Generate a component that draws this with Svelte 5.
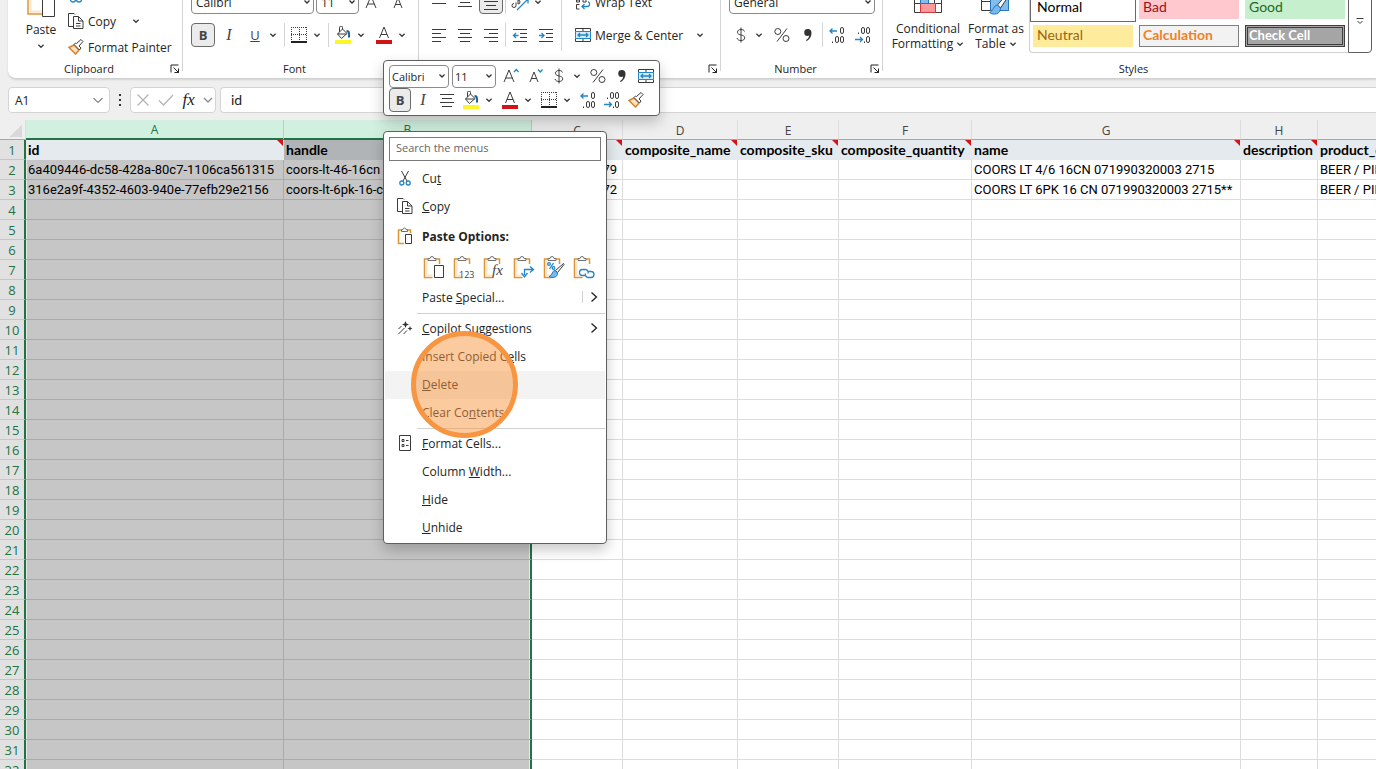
<script lang="ts">
	type Cell = { text: string; note?: boolean; right?: boolean };

	const columns = [
		{ name: 'A', width: 258 },
		{ name: 'B', width: 248 },
		{ name: 'C', width: 91 },
		{ name: 'D', width: 115 },
		{ name: 'E', width: 101 },
		{ name: 'F', width: 133 },
		{ name: 'G', width: 269 },
		{ name: 'H', width: 77 },
		{ name: 'I', width: 120 }
	];

	const filled: Cell[][] = [
		[
			{ text: 'id', note: true },
			{ text: 'handle' },
			{ text: '', note: true },
			{ text: 'composite_name', note: true },
			{ text: 'composite_sku', note: true },
			{ text: 'composite_quantity', note: true },
			{ text: 'name', note: true },
			{ text: 'description', note: true },
			{ text: 'product_category' }
		],
		[
			{ text: '6a409446-dc58-428a-80c7-1106ca561315' },
			{ text: 'coors-lt-46-16cn' },
			{ text: '79', right: true },
			{ text: '' },
			{ text: '' },
			{ text: '' },
			{ text: 'COORS LT 4/6 16CN 071990320003 2715' },
			{ text: '' },
			{ text: 'BEER / PILSNER' }
		],
		[
			{ text: '316e2a9f-4352-4603-940e-77efb29e2156' },
			{ text: 'coors-lt-6pk-16-cn' },
			{ text: '72', right: true },
			{ text: '' },
			{ text: '' },
			{ text: '' },
			{ text: 'COORS LT 6PK 16 CN 071990320003 2715**' },
			{ text: '' },
			{ text: 'BEER / PILSNER' }
		]
	];

	const blank: Cell[] = columns.map(() => ({ text: '' }));
	const rows = Array.from({ length: 32 }, (_, i) => filled[i] ?? blank);

	const pasteKinds = ['Paste', 'Values', 'Formulas', 'Transpose', 'Formatting', 'Paste Link'];
	let formula = $state('id');
	let search = $state('');
</script>

{#snippet chev()}
	<svg class="chev" width="12" height="12" viewBox="0 0 12 12"><path d="M3.4 4.8 6 7.3l2.6-2.5" /></svg>
{/snippet}

{#snippet drop(label: string)}
	<button class="drop" aria-label={label}>{@render chev()}</button>
{/snippet}

{#snippet launcher(label: string)}
	<button class="launcher" aria-label={label}>
		<svg width="10" height="10" viewBox="0 0 10 10"><path d="M1 8.5V1h7.5M3.5 3.5l5 5M8.5 4.5v4h-4" /></svg>
	</button>
{/snippet}

{#snippet lines(kind: string)}
	<svg width="16" height="16" viewBox="0 0 16 16">
		{#if kind === 'left'}
			<path d="M1 2.5h14M1 6.5h9M1 10.5h14M1 14.5h9" />
		{:else if kind === 'right'}
			<path d="M1 2.5h14M6 6.5h9M1 10.5h14M6 14.5h9" />
		{:else if kind === 'top'}
			<path d="M1 1.5h14M3 5.5h10M1 9.5h14" />
		{:else if kind === 'middle'}
			<path d="M1 4.5h14M3 8.5h10M1 12.5h14" />
		{:else if kind === 'bottom'}
			<path d="M1 7.5h14M3 11.5h10M1 15.5h14" />
		{:else}
			<path d="M1 2.5h14M3 6.5h10M1 10.5h14M3 14.5h10" />
		{/if}
	</svg>
{/snippet}

{#snippet indent(out: boolean)}
	<svg width="16" height="16" viewBox="0 0 16 16">
		<path d="M1 2.5h14M8 6.5h7M8 10.5h7M1 14.5h14" />
		{#if out}
			<path class="blue" d="M6.5 8.5h-5M4 6 1.5 8.5 4 11" />
		{:else}
			<path class="blue" d="M1 8.5h5M3.5 6 6 8.5 3.5 11" />
		{/if}
	</svg>
{/snippet}

{#snippet borders()}
	<svg width="16" height="16" viewBox="0 0 16 16">
		<path stroke-dasharray="1 1" d="M.5 0v14M8.5 0v14M15.5 0v14M0 .5h16M0 7.5h16" />
		<path class="dark" d="M0 15h16" />
	</svg>
{/snippet}

{#snippet bucket()}
	<svg width="18" height="18" viewBox="0 0 18 18">
		<path d="M3.5 8 8.5 3l4.5 4.5-5.5 5zM8.5 3V1.500a1.500 1.500 0 0 0-3 0V6M3.500 8h9" />
		<path class="navy" d="M12.500 5.500c2-1 3 1 2.500 6" />
		<path class="yellow" d="M1 14h16v4H1z" />
	</svg>
{/snippet}

{#snippet fontColor()}
	<svg width="18" height="18" viewBox="0 0 18 18">
		<path d="m4.500 12 4.500-11 4.500 11M6 8.500h6" />
		<path class="red" d="M1 14h16v4H1z" />
	</svg>
{/snippet}

{#snippet merge()}
	<svg width="16" height="16" viewBox="0 0 16 16">
		<path d="M.5 4.500V1.500h15v3M.5 11.500v3h15v-3M8 1.500v3M8 11.500v3" />
		<path class="sky" d="M.5 4.500h15v7H.5z" />
		<path class="blue" d="M3 8h10M5 6 3 8l2 2M11 6l2 2-2 2" />
	</svg>
{/snippet}

{#snippet decimals(more: boolean)}
	<svg width="18" height="18" viewBox="0 0 18 18">
		{#if more}
			<path class="blue" d="M9 5H2M4.500 2.500 2 5l2.500 2.500" />
			<rect x="12.500" y="1.500" width="3" height="6" rx="1.500" />
			<rect x="7.500" y="10.500" width="3" height="6" rx="1.500" />
			<rect x="12.500" y="10.500" width="3" height="6" rx="1.500" />
			<path d="M4.500 15.500v1.500" />
		{:else}
			<rect x="7.500" y="1.500" width="3" height="6" rx="1.500" />
			<rect x="12.500" y="1.500" width="3" height="6" rx="1.500" />
			<rect x="12.500" y="10.500" width="3" height="6" rx="1.500" />
			<path class="blue" d="M1 13.500h7.500M6 11l2.500 2.500L6 16" />
			<path d="M4.500 6.500V8M10.500 15.500V17" />
		{/if}
	</svg>
{/snippet}

{#snippet brush()}
	<svg width="16" height="16" viewBox="0 0 16 16">
		<path class="tan" d="M1 8.500 6 6l5 5-3.500 4z" />
		<path class="paper" d="m6 5.500 5.500 5.500 1.500-2-2-2 4-4.500-2-2L8.500 4.500l-1-.5z" />
	</svg>
{/snippet}

{#snippet percent()}
	<svg width="18" height="18" viewBox="0 0 18 18">
		<circle cx="4.800" cy="5.500" r="3" /><circle cx="13" cy="12.500" r="3" /><path d="M14 2.500 4 15.500" />
	</svg>
{/snippet}

{#snippet comma()}
	<svg width="12" height="16" viewBox="0 0 12 16">
		<path class="ink" d="M6 2a3.500 3.500 0 0 0-.5 7c.8 0 1.300-.2 1.700-.5-.3 2-1.500 3.500-3.200 4.500l.5 1c3-1.200 5-4.500 5-8C9.500 3.500 8.200 2 6 2z" />
	</svg>
{/snippet}

{#snippet dollar()}
	<svg width="12" height="18" viewBox="0 0 12 18">
		<path d="M6 1.500v15M9.500 5.500C9 4 7.800 3.500 6 3.500c-2 0-3.500 1-3.500 2.700C2.500 10 9.700 8 9.700 11.800c0 1.700-1.500 2.700-3.700 2.700-2 0-3.500-.8-4-2.500" />
	</svg>
{/snippet}

{#snippet sizeA(grow: boolean)}
	<svg width="18" height="18" viewBox="0 0 18 18">
		{#if grow}
			<path d="m2 15 5-12 5 12M3.500 11h7" />
			<path class="blue" d="m12 5 2.300-2.500L16.600 5" />
		{:else}
			<path d="m4 15 4-10 4 10M5.300 11.500h5.500" />
			<path class="blue" d="m12 2.500 2.300 2.500 2.300-2.500" />
		{/if}
	</svg>
{/snippet}

{#snippet copyIcon()}
	<svg width="16" height="16" viewBox="0 0 16 16">
		<path d="M5 13.500H.500V.500H6l1 1M5.500 3.500h5l4.500 4.500v7.500H5.500zM10.500 3.500V8H15M8 10.500h4.500M8 13h4.500" />
	</svg>
{/snippet}

{#snippet clip(kind: string)}
	<svg width="22" height="24" viewBox="0 0 22 24">
		<path class="orange" d="M5 4H1.500v18.500h8M13 4h3.500v5" />
		<path class="peach" d="M3.500 6v14.500h6" />
		<path class="soft" d="M5 5.500V3.500h2a2 2 0 0 1 4 0h2v2z" />
		{#if kind === 'Paste'}
			<path class="paper" d="M11.500 10.500h9v12h-9z" />
		{:else if kind === 'Values'}
			<text x="6" y="23">123</text>
		{:else if kind === 'Formulas'}
			<text class="fx" x="9" y="20">fx</text>
		{:else if kind === 'Transpose'}
			<path class="blue" d="M11.500 20v-5.500H20M17 11.500l3.500 3-3.500 3M8.500 18l3 4 3-4" />
		{:else if kind === 'Formatting'}
			<path class="blue" d="m10.500 8-4 6" /><circle class="blue" cx="6" cy="9" r="1.300" /><circle class="blue" cx="10.500" cy="13" r="1.300" />
			<path class="paper" d="m20.500 8.500-8 7 2 2 6.500-8z" />
			<path class="paint" d="M12 15.500c-3 0-2.500 5-6 6 3 2 9 1 8.500-3.500z" />
		{:else}
			<path class="blue" d="M12 20.500H9.500a3 3 0 0 1 0-6h3a3 3 0 0 1 2.500 4M15 16.500h3a3 3 0 0 1 0 6h-3a3 3 0 0 1-2.500-4" />
		{/if}
	</svg>
{/snippet}

{#snippet sheet()}
	<svg width="32" height="30" viewBox="0 0 32 30">
		<path class="paper" d="M2.500 1.500h27v27h-27zM2.500 10.500h27M2.500 19.500h27M9.500 1.500v27M22.500 1.500v27" />
		<path class="skyfill" d="M8.500 10.500h8v9h-8z" />
		<path class="rose" d="M8.500 19.500h15v9h-15z" />
	</svg>
{/snippet}

{#snippet menuItem(before: string, key: string, after: string)}
	<span class="item-text">{before}<u>{key}</u>{after}</span>
{/snippet}

<div class="excel">
	<header class="ribbon">
		<section class="group clipboard">
			<div class="body">
				<button class="big">
					<svg width="30" height="32" viewBox="0 0 30 32">
						<path class="orange wide" d="M8 4H2v25h14M20 4h6v7" />
						<path class="peach" d="M4.500 7v19.500H16" />
						<path class="paper" d="M16.500 14.500h12v17h-12z" />
					</svg>
					<span>Paste</span>
					{@render chev()}
				</button>
				<div class="stack">
					<button class="line cut">
						<svg width="16" height="16" viewBox="0 0 16 16"><path d="m4 0 6 10M12 0 6 10" /><circle class="blue" cx="5" cy="12.500" r="2.500" /><circle class="blue" cx="11" cy="12.500" r="2.500" /></svg>
						Cut
					</button>
					<div class="split">
						<button class="line">{@render copyIcon()} Copy</button>
						{@render drop('Copy options')}
					</div>
					<button class="line">{@render brush()} Format Painter</button>
				</div>
			</div>
			<div class="caption"><span>Clipboard</span>{@render launcher('Clipboard settings')}</div>
		</section>
		<i class="divider"></i>

		<section class="group font">
			<div class="tools">
				<div class="row">
					<select class="wide-select" aria-label="Font"><option>Calibri</option></select>
					<select class="size-select" aria-label="Font size"><option>11</option></select>
					<button class="tool" aria-label="Increase font size">{@render sizeA(true)}</button>
					<button class="tool" aria-label="Decrease font size">{@render sizeA(false)}</button>
				</div>
				<div class="row">
					<button class="tool pressed"><b>B</b></button>
					<button class="tool"><em>I</em></button>
					<button class="tool"><u>U</u></button>
					{@render drop('Underline style')}
					<i class="rule"></i>
					<button class="tool" aria-label="Borders">{@render borders()}</button>
					{@render drop('Border styles')}
					<i class="rule"></i>
					<button class="tool" aria-label="Fill colour">{@render bucket()}</button>
					{@render drop('Fill colours')}
					<button class="tool" aria-label="Font colour">{@render fontColor()}</button>
					{@render drop('Font colours')}
				</div>
			</div>
			<div class="caption"><span>Font</span>{@render launcher('Font settings')}</div>
		</section>
		<i class="divider"></i>

		<section class="group alignment">
			<div class="body">
				<div class="tools">
					<div class="row">
						<button class="tool" aria-label="Top align">{@render lines('top')}</button>
						<button class="tool" aria-label="Middle align">{@render lines('middle')}</button>
						<button class="tool pressed" aria-label="Bottom align">{@render lines('bottom')}</button>
						<i class="rule"></i>
						<button class="tool" aria-label="Orientation">
							<svg width="18" height="18" viewBox="0 0 18 18"><path d="M3 10.500a2 2 0 1 0 2 2v-3M7 4v7a2 2 0 1 0 0-4" /><path class="blue" d="M6 17 17 6M12.500 6H17v4.500" /></svg>
						</button>
						{@render drop('Orientations')}
					</div>
					<div class="row">
						<button class="tool" aria-label="Align left">{@render lines('left')}</button>
						<button class="tool" aria-label="Center">{@render lines('center')}</button>
						<button class="tool" aria-label="Align right">{@render lines('right')}</button>
						<i class="rule"></i>
						<button class="tool" aria-label="Decrease indent">{@render indent(true)}</button>
						<button class="tool" aria-label="Increase indent">{@render indent(false)}</button>
					</div>
				</div>
				<i class="divider short"></i>
				<div class="tools wrap">
					<button class="line">
						<svg width="16" height="16" viewBox="0 0 16 16"><path d="M1.500 4.500h3V8h-3V6h3M8 1v7h3V4.500H8M4.500 10.500h-3V15h3" /><path class="blue" d="M13 7.500c3 2 1.500 5-1 5H7M9.500 10 7 12.500 9.500 15" /></svg>
						Wrap Text
					</button>
					<div class="split">
						<button class="line">{@render merge()} Merge &amp; Center</button>
						{@render drop('Merge options')}
					</div>
				</div>
			</div>
			<div class="caption"><span></span>{@render launcher('Alignment settings')}</div>
		</section>
		<i class="divider"></i>

		<section class="group number">
			<div class="tools">
				<select aria-label="Number format"><option>General</option></select>
				<div class="row">
					<button class="tool" aria-label="Accounting format">{@render dollar()}</button>
					{@render drop('Currencies')}
					<button class="tool" aria-label="Percent">{@render percent()}</button>
					<button class="tool" aria-label="Comma style">{@render comma()}</button>
					<i class="rule"></i>
					<button class="tool" aria-label="Increase decimal">{@render decimals(true)}</button>
					<button class="tool" aria-label="Decrease decimal">{@render decimals(false)}</button>
				</div>
			</div>
			<div class="caption"><span>Number</span>{@render launcher('Number settings')}</div>
		</section>
		<i class="divider"></i>

		<section class="group styles">
			<div class="body">
				<button class="big tall">
					{@render sheet()}
					<span>Conditional<br />Formatting {@render chev()}</span>
				</button>
				<button class="big tall">
					<svg width="34" height="34" viewBox="0 0 34 34">
						<path class="paper" d="M2.500 1.500h27v27h-27zM2.500 10.500h27M2.500 19.500h27M11.500 1.500v27M20.500 1.500v27" />
						<path class="skyfill" d="M11.500 10.500h18v18h-18z" />
						<path class="paper" d="M31 8 18.500 23l3 3L33 9z" />
						<path class="paint" d="M18.500 23c-4 0-4 6-8 7.500 4 3 11 2 11-4.500z" />
					</svg>
					<span>Format as<br />Table {@render chev()}</span>
				</button>
				<div class="gallery">
					<div class="swatches">
						<button class="swatch normal">Normal</button>
						<button class="swatch bad">Bad</button>
						<button class="swatch good">Good</button>
						<button class="swatch neutral">Neutral</button>
						<button class="swatch calculation">Calculation</button>
						<button class="swatch check">Check Cell</button>
					</div>
					<button class="more" aria-label="More styles">
						<svg width="10" height="10" viewBox="0 0 10 10"><path d="M1.500 2.500h7M2.500 5 5 7.500 7.500 5" /></svg>
					</button>
				</div>
			</div>
			<div class="caption"><span>Styles</span></div>
		</section>
	</header>

	<div class="formula-bar">
		<button class="field name-box">
			A1
			<svg width="12" height="12" viewBox="0 0 12 12"><path d="m1.500 4 4.500 4.500L10.500 4" /></svg>
		</button>
		<svg class="dots" width="4" height="14" viewBox="0 0 4 14"><path d="M1 1h2v2H1zM1 6h2v2H1zM1 11h2v2H1z" /></svg>
		<div class="field fx-box">
			<button aria-label="Cancel"><svg width="14" height="14" viewBox="0 0 14 14"><path class="faint" d="m1.500 1.500 11 11M12.500 1.500l-11 11" /></svg></button>
			<button aria-label="Enter"><svg width="16" height="14" viewBox="0 0 16 14"><path class="faint" d="m1 7.500 4.500 4.500L15 2" /></svg></button>
			<button class="fx-label">fx</button>
			<button aria-label="Functions"><svg width="10" height="12" viewBox="0 0 10 12"><path class="grey" d="M1 4l4 4 4-4" /></svg></button>
		</div>
		<input class="field formula" aria-label="Formula" bind:value={formula} />
	</div>

	<main class="sheet">
		<table>
			<colgroup>
				<col class="row-col" />
				{#each columns as column (column.name)}
					<col style="width: {column.width}px" />
				{/each}
			</colgroup>
			<thead>
				<tr>
					<th class="corner" aria-label="Select all"></th>
					{#each columns as column, c (column.name)}
						<th class:selected={c < 2}>{column.name}</th>
					{/each}
				</tr>
			</thead>
			<tbody>
				{#each rows as cells, r}
					<tr class:head={r === 0}>
						<th>{r + 1}</th>
						{#each cells as cell, c}
							<td class:selected={c < 2} class:first={c === 0} class:last={c === 1} class:note={cell.note} class:right={cell.right}>{cell.text}</td>
						{/each}
					</tr>
				{/each}
			</tbody>
		</table>
	</main>

	<div class="mini">
		<div class="row">
			<select class="mini-font" aria-label="Font"><option>Calibri</option></select>
			<select class="mini-size" aria-label="Font size"><option>11</option></select>
			<button class="tool" aria-label="Increase font size">{@render sizeA(true)}</button>
			<button class="tool" aria-label="Decrease font size">{@render sizeA(false)}</button>
			<button class="tool" aria-label="Accounting format">{@render dollar()}</button>
			{@render drop('Currencies')}
			<button class="tool" aria-label="Percent">{@render percent()}</button>
			<button class="tool" aria-label="Comma style">{@render comma()}</button>
			<button class="tool" aria-label="Merge and center">{@render merge()}</button>
		</div>
		<div class="row">
			<button class="tool pressed"><b>B</b></button>
			<button class="tool"><em>I</em></button>
			<button class="tool" aria-label="Center">{@render lines('center')}</button>
			<button class="tool" aria-label="Fill colour">{@render bucket()}</button>
			{@render drop('Fill colours')}
			<button class="tool" aria-label="Font colour">{@render fontColor()}</button>
			{@render drop('Font colours')}
			<button class="tool" aria-label="Borders">{@render borders()}</button>
			{@render drop('Border styles')}
			<button class="tool" aria-label="Increase decimal">{@render decimals(true)}</button>
			<button class="tool" aria-label="Decrease decimal">{@render decimals(false)}</button>
			<button class="tool" aria-label="Format painter">{@render brush()}</button>
		</div>
	</div>

	<div class="menu">
		<input class="search" placeholder="Search the menus" aria-label="Search the menus" bind:value={search} />
		<button class="item">
			<svg width="16" height="16" viewBox="0 0 16 16"><path d="m4.500 1 5.500 10M11.500 1 6 11" /><circle class="blue" cx="4.800" cy="13" r="2" /><circle class="blue" cx="11.200" cy="13" r="2" /></svg>
			{@render menuItem('Cu', 't', '')}
		</button>
		<button class="item">{@render copyIcon()}{@render menuItem('', 'C', 'opy')}</button>
		<div class="item heading">
			<svg width="16" height="18" viewBox="0 0 16 18">
				<path class="orange" d="M4 3H1.500v13.500H7M11 3h2.500v3" />
				<path class="soft" d="M4.500 4.500v-2h1.500a1.500 1.500 0 0 1 3 0h1.500v2z" />
				<path class="paper" d="M8.500 7.500h6v9h-6z" />
			</svg>
			<span class="item-text">Paste Options:</span>
		</div>
		<div class="pastes">
			{#each pasteKinds as kind}
				<button aria-label={kind}>{@render clip(kind)}</button>
			{/each}
		</div>
		<button class="item">
			<span></span>{@render menuItem('Paste ', 'S', 'pecial...')}
			<svg class="arrow split-arrow" width="8" height="12" viewBox="0 0 8 12"><path d="m1.500 1.500 5 4.500-5 4.500" /></svg>
		</button>
		<hr />
		<button class="item">
			<svg width="16" height="16" viewBox="0 0 16 16">
				<path class="ink" d="m8.500 1 1 2.500L12 4.500 9.500 5.500l-1 2.500-1-2.500L5 4.500l2.500-1zM13 6l.7 1.800 1.800.7-1.800.7L13 11l-.7-1.800-1.800-.7 1.800-.7z" />
				<path d="m4.500 6-3 3M7.500 8l-6 6M10 10.500 6.500 14" />
			</svg>
			{@render menuItem('', 'C', 'opilot Suggestions')}
			<svg class="arrow" width="8" height="12" viewBox="0 0 8 12"><path d="m1.500 1.500 5 4.500-5 4.500" /></svg>
		</button>
		<button class="item"><span></span>{@render menuItem('Insert Copied C', 'e', 'lls')}</button>
		<button class="item active"><span></span>{@render menuItem('', 'D', 'elete')}<span class="marker"></span></button>
		<button class="item"><span></span>{@render menuItem('Clear Co', 'n', 'tents')}</button>
		<hr />
		<button class="item">
			<svg width="14" height="16" viewBox="0 0 14 16"><path d="M1.500.500h11v15h-11zM4 4.500h2v2H4zM4 9.500h2v2H4zM8 5.500h2.500M8 10.500h2.500" /></svg>
			{@render menuItem('', 'F', 'ormat Cells...')}
		</button>
		<button class="item"><span></span>{@render menuItem('Column ', 'W', 'idth...')}</button>
		<button class="item"><span></span>{@render menuItem('', 'H', 'ide')}</button>
		<button class="item"><span></span>{@render menuItem('', 'U', 'nhide')}</button>
	</div>
</div>

<style>
	:global(body) {
		overflow: hidden;
		background: #efefef;
	}

	.excel {
		position: relative;
		display: flex;
		flex-direction: column;
		height: 100vh;
		overflow: hidden;
		font-family: 'Open Sans', 'Noto Sans', sans-serif;
		font-size: 12px;
		color: #242424;
	}

	button {
		padding: 0;
		border: 0;
		background: none;
		color: inherit;
		font: inherit;
	}

	svg {
		flex: none;
		fill: none;
		stroke: #3b3b3b;
		stroke-width: 1;
	}

	.blue {
		stroke: #2485c7;
		stroke-width: 1.3;
	}

	.sky {
		fill: #d3ebfa;
		stroke: #2485c7;
	}

	.navy {
		stroke: #1d5f96;
		stroke-width: 2;
	}

	.dark {
		stroke: #222;
		stroke-width: 2;
	}

	.yellow {
		fill: #fcf528;
		stroke: none;
	}

	.red {
		fill: #d01418;
		stroke: none;
	}

	.tan {
		fill: #fbe3c4;
		stroke: #d9822b;
		stroke-width: 1.5;
	}

	.ink {
		fill: #333;
		stroke: none;
	}

	.orange {
		stroke: #de9436;
		stroke-width: 1.5;
	}

	.peach {
		stroke: #fbe6cc;
		stroke-width: 2;
	}

	.soft {
		fill: #fff;
		stroke: #6f6f6f;
	}

	.paper {
		fill: #fff;
	}

	.skyfill {
		fill: #83bdec;
		stroke: #2477bd;
	}

	.rose {
		fill: #ff9a9a;
		stroke: #d9363c;
	}

	.paint {
		fill: #76b9ee;
		stroke: #2477bd;
	}

	.faint {
		stroke: #b4b4b4;
		stroke-width: 1.3;
	}

	.grey {
		stroke: #8a8a8a;
		stroke-width: 1.3;
	}

	.chev {
		stroke-width: 1.3;
	}

	/* ribbon: its upper part is scrolled out above the window */
	.ribbon {
		display: flex;
		flex: none;
		margin: -20px 0 0 8px;
		background: #fff;
		border-bottom: 1px solid #d0d0d0;
		border-bottom-left-radius: 8px;
		box-shadow: 0 1px 2px rgba(0, 0, 0, 0.12);
	}

	.group {
		display: flex;
		flex-direction: column;
		flex: none;
	}

	.body {
		display: flex;
		height: 81px;
	}

	.divider {
		flex: none;
		width: 1px;
		margin-bottom: 7px;
		background: #d4d4d4;
	}

	.short {
		margin: 0 2px 10px 3px;
	}

	.caption {
		display: flex;
		align-items: center;
		box-sizing: border-box;
		height: 17px;
		padding: 0 2px 2px 0;
		font-size: 11px;
	}

	.caption span {
		flex: 1;
		text-align: center;
	}

	.launcher {
		display: flex;
	}

	.launcher svg {
		stroke: #222;
	}

	.clipboard .body {
		padding-left: 12px;
		gap: 6px;
	}

	.clipboard {
		width: 174px;
	}

	.font {
		width: 235px;
	}

	.alignment {
		width: 301px;
	}

	.number {
		width: 161px;
	}

	.styles {
		flex: 1;
	}

	.styles .caption {
		padding-left: 10px;
	}

	.big {
		display: flex;
		flex-direction: column;
		align-items: center;
		width: 42px;
		padding-top: 5px;
		line-height: 16px;
	}

	.big > span {
		margin: 5px 0 2px;
	}

	.stack {
		display: flex;
		flex-direction: column;
		padding-top: 2px;
	}

	.line {
		display: flex;
		align-items: center;
		gap: 4px;
		height: 26px;
		white-space: nowrap;
	}

	.cut {
		align-items: flex-start;
		line-height: 16px;
	}

	.cut svg {
		margin-top: 5px;
	}

	.split {
		display: flex;
		align-items: center;
	}

	.clipboard .split {
		gap: 16px;
	}

	.tools {
		box-sizing: border-box;
		height: 81px;
		padding: 10px 0 0 8px;
	}

	.row {
		display: flex;
		align-items: center;
		gap: 2px;
		height: 24px;
	}

	.row + .row,
	select + .row {
		margin-top: 9px;
	}

	.tool {
		display: flex;
		align-items: center;
		justify-content: center;
		flex: none;
		width: 24px;
		height: 24px;
		box-sizing: border-box;
		font-size: 13px;
		line-height: 20px;
		color: #444;
	}

	.tool em {
		font-family: 'Liberation Serif', serif;
		font-size: 16px;
	}

	.pressed {
		border: 1px solid #6a6a6a;
		border-radius: 4px;
		background: #ebebeb;
	}

	.drop {
		display: flex;
		margin: 0 3px 0 -2px;
	}

	.rule {
		flex: none;
		width: 1px;
		height: 24px;
		background: #d4d4d4;
	}

	select {
		box-sizing: border-box;
		height: 24px;
		padding: 0 16px 0 4px;
		border: 1px solid #8a8a8a;
		border-radius: 4px;
		appearance: none;
		background: #fff
			url("data:image/svg+xml,%3Csvg xmlns='http://www.w3.org/2000/svg' width='8' height='6' fill='none' stroke='%23333' stroke-width='1.3'%3E%3Cpath d='M1.5 1.5 4 4l2.5-2.5'/%3E%3C/svg%3E")
			no-repeat right 2px center;
		color: #242424;
		font: inherit;
	}

	.wide-select {
		width: 123px;
	}

	.size-select {
		width: 43px;
	}

	.number select {
		display: block;
		width: 146px;
	}

	.wrap {
		padding: 10px 0 0 11px;
	}

	.wrap .line {
		height: 24px;
	}

	.wrap .split {
		margin-top: 9px;
		gap: 13px;
	}

	.styles .body {
		padding-left: 8px;
	}

	.tall {
		width: 74px;
		padding-top: 2px;
		line-height: 15px;
	}

	.tall + .tall {
		width: 62px;
	}

	.tall > svg {
		height: 34px;
	}

	.tall .chev,
	.tall span :global(svg) {
		height: 12px;
		margin: 0 -2px;
		vertical-align: -2px;
	}

	.gallery {
		display: flex;
		margin: 0 0 8px 2px;
	}

	.swatches {
		display: grid;
		grid-template-columns: repeat(3, 100px);
		grid-auto-rows: 22px;
		gap: 6px;
		align-content: end;
		padding: 0 3px 5px;
		border: 1px solid #d0d0d0;
		border-right: 0;
		border-bottom-left-radius: 4px;
	}

	.swatch {
		box-sizing: border-box;
		padding: 0 4px 2px;
		font-family: Lato, sans-serif;
		font-size: 14px;
		line-height: 16px;
		text-align: left;
	}

	.normal {
		background: #fff;
		color: #000;
		outline: 1px solid #6a6a6a;
		outline-offset: 2px;
	}

	.bad {
		background: #ffc7ce;
		color: #9c0f16;
	}

	.good {
		background: #c6efce;
		color: #1c6b1c;
	}

	.neutral {
		background: #ffeb9c;
		color: #9c6510;
	}

	.calculation {
		padding-left: 3px;
		border: 1px solid #7f7f7f;
		background: #f2f2f2;
		color: #ee8222;
		font-weight: bold;
	}

	.check {
		padding: 0 1px 2px;
		border: 3px double #3f3f3f;
		background: #a5a5a5;
		color: #fff;
		font-size: 13px;
		font-weight: bold;
		line-height: 14px;
	}

	.more {
		display: flex;
		align-items: flex-end;
		justify-content: center;
		width: 24px;
		padding-bottom: 26px;
		border: 1px solid #5f5f5f;
		border-bottom-right-radius: 4px;
		box-sizing: border-box;
	}

	.formula-bar {
		display: flex;
		align-items: center;
		flex: none;
		padding: 8px 0 7px 8px;
	}

	.field {
		box-sizing: border-box;
		height: 26px;
		border: 1px solid #d4d4d4;
		border-radius: 4px;
		background: #fff;
	}

	.name-box {
		display: flex;
		align-items: center;
		justify-content: space-between;
		width: 102px;
		padding: 0 5px 0 6px;
	}

	.dots {
		margin: 0 8px;
		fill: #333;
		stroke: none;
	}

	.fx-box {
		display: flex;
		align-items: center;
		justify-content: space-between;
		width: 86px;
		padding: 0 2px 0 5px;
	}

	.fx-box button {
		display: flex;
	}

	.fx-label {
		font-family: 'Liberation Serif', serif;
		font-size: 17px;
		font-style: italic;
		line-height: 20px;
	}

	.formula {
		flex: 1;
		margin-left: 4px;
		padding: 0 10px 2px;
		border-right: 0;
		border-radius: 4px 0 0 4px;
		font-family: Lato, sans-serif;
		font-size: 14px;
		color: #222;
	}

	.sheet {
		flex: 1;
		overflow: hidden;
	}

	table {
		width: 0;
		min-width: 100%;
		border-spacing: 0;
		table-layout: fixed;
		background: #fff;
	}

	.row-col {
		width: 26px;
	}

	th,
	td {
		box-sizing: border-box;
		height: 20px;
		padding: 0;
		overflow: hidden;
		line-height: 18px;
		white-space: nowrap;
	}

	thead th {
		padding-top: 2px;
		border-right: 1px solid #dcdcdc;
		border-bottom: 1px solid #a6a6a6;
		background: #efefef;
		color: #444;
		font-weight: normal;
		line-height: 16px;
	}

	thead .selected {
		border-right-color: #b4d2c2;
		border-bottom: 2px solid #217346;
		background: #d2f0e0;
		color: #217346;
	}

	.corner {
		background: linear-gradient(135deg, transparent 50%, #d9d9d9 50%) no-repeat 10px 5px / 12px 12px #efefef;
	}

	tbody th {
		border-right: 2px solid #217346;
		border-bottom: 1px solid #c6c6c6;
		background: #e1e1e1;
		color: #217346;
		font-size: 13px;
		font-weight: normal;
	}

	td {
		position: relative;
		padding: 0 2px;
		border-right: 1px solid #dcdcdc;
		border-bottom: 1px solid #dcdcdc;
		color: #000;
		font-family: Roboto, sans-serif;
		font-size: 13px;
	}

	td.selected {
		border-color: #aaa;
		background: #c6c6c6;
	}

	td.first {
		box-shadow: inset 1px 0 #e8e8e8;
	}

	td.last {
		border-right: 2px solid #217346;
		box-shadow: inset -1px 0 #e8e8e8;
	}

	td.right {
		padding-right: 5px;
		text-align: right;
	}

	.head td {
		border-color: #e4eaed;
		background: #e4eaed;
		font-family: Lato, sans-serif;
		font-size: 14px;
		font-weight: bold;
	}

	.head td.last {
		border-color: #217346;
		border-bottom-color: #b0b4b7;
		background: #b0b4b7;
	}

	.note::after {
		content: '';
		position: absolute;
		top: 0;
		right: 0;
		border-top: 6px solid #d01418;
		border-left: 6px solid transparent;
	}

	.mini,
	.menu {
		position: absolute;
		border: 1px solid #5f5f5f;
		border-radius: 4px;
		background: #fff;
		box-shadow: 0 6px 14px rgba(0, 0, 0, 0.22);
	}

	.mini {
		top: 60px;
		left: 383px;
		padding: 3px 1px 3px 5px;
	}

	.mini .row {
		gap: 0;
	}

	.mini .row + .row {
		margin: 0;
	}

	.mini select {
		height: 23px;
		padding-left: 2px;
		margin-right: 3px;
		font-size: 11px;
	}

	.mini-font {
		width: 60px;
	}

	.mini-size {
		width: 44px;
	}

	.mini .drop {
		margin: 0 3px 0 0;
	}

	.mini .pressed {
		width: 22px;
	}

	.menu {
		top: 131px;
		left: 383px;
		display: flex;
		flex-direction: column;
		width: 222px;
		padding: 5px 0 1px;
	}

	.search {
		box-sizing: border-box;
		height: 24px;
		margin: 0 5px 4px;
		padding: 0 6px 4px;
		border: 1px solid #7a7a7a;
		font: inherit;
		font-size: 11px;
	}

	.search::placeholder {
		color: #666;
	}

	.item {
		position: relative;
		display: grid;
		grid-template-columns: 24px 1fr auto;
		align-items: center;
		justify-items: center;
		box-sizing: border-box;
		height: 28px;
		margin: 0 1px;
		padding: 0 7px 2px 8px;
		column-gap: 5px;
		text-align: left;
	}

	.item-text {
		justify-self: start;
	}

	.heading {
		margin-top: 2px;
		font-weight: bold;
	}

	.arrow {
		stroke: #222;
		stroke-width: 1.3;
	}

	.split-arrow {
		padding-left: 7px;
		border-left: 1px solid #d0d0d0;
	}

	.active {
		background: #f3f3f3;
	}

	.pastes {
		display: flex;
		align-items: center;
		gap: 8px;
		box-sizing: border-box;
		height: 33px;
		padding: 0 0 2px 39px;
	}

	.pastes button {
		display: flex;
	}

	text {
		fill: #444;
		stroke: none;
		font-size: 9px;
	}

	.fx {
		font-family: 'Liberation Serif', serif;
		font-size: 15px;
		font-style: italic;
	}

	hr {
		width: 188px;
		margin: 1px 1px 1px auto;
		border: 0;
		border-top: 1px solid #d0d0d0;
	}

	.marker {
		position: absolute;
		z-index: 1;
		top: -40px;
		left: 26px;
		box-sizing: border-box;
		width: 107px;
		height: 107px;
		border: 5px solid #f79540;
		border-radius: 50%;
		background: rgba(247, 149, 64, 0.5);
	}
</style>
